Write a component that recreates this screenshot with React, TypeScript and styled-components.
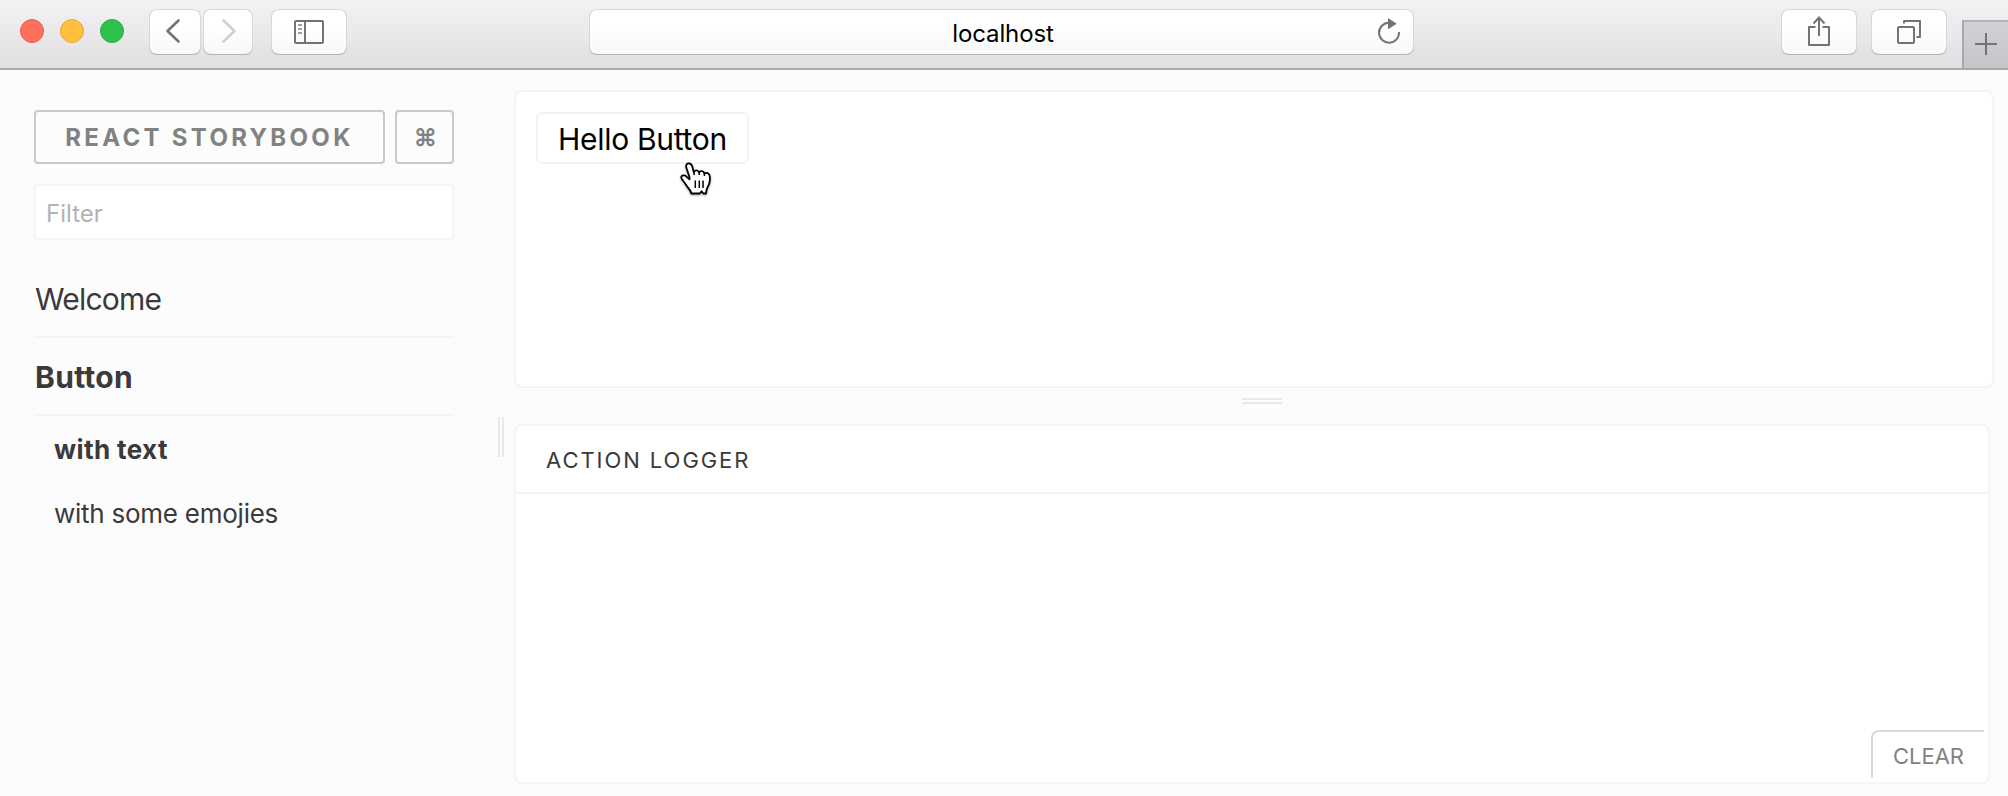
import React from 'react';
import styled, { createGlobalStyle, css } from 'styled-components';

const Global = createGlobalStyle`
  * { box-sizing: border-box; }
  body { margin: 0; background: #fcfcfc; font-family: Inter, "Liberation Sans", sans-serif; color: #333; }
  button { font-family: inherit; margin: 0; padding: 0; }
`;

const Window = styled.div`
  width: 2008px;
  height: 796px;
  display: flex;
  flex-direction: column;
  overflow: hidden;
`;

const Toolbar = styled.header`
  flex: none;
  height: 70px;
  display: flex;
  align-items: flex-start;
  padding: 9px 0 0 20px;
  border-bottom: 2px solid #aca8ae;
  background: linear-gradient(#f4f2f5, #e1dee2);
`;

const Lights = styled.div`
  display: flex;
  gap: 16px;
  padding-top: 10px;
  width: 129px;
`;

const Light = styled.span<{ $fill: string; $edge: string }>`
  width: 24px;
  height: 24px;
  border-radius: 50%;
  background: ${(p) => p.$fill};
  border: 1px solid ${(p) => p.$edge};
`;

const raised = css`
  height: 46px;
  border-radius: 8px;
  background: linear-gradient(#ffffff 30%, #f8f8f8);
  box-shadow: inset 0 -1px 0 #b6b3b8, inset 0 0 0 1px #dad7db;
`;

const ToolButton = styled.button<{ $width: number; $gap?: number }>`
  ${raised}
  border: 0;
  flex: none;
  width: ${(p) => p.$width}px;
  margin-right: ${(p) => p.$gap ?? 0}px;
  display: flex;
`;

const AddressBar = styled.div`
  ${raised}
  flex: none;
  width: 825px;
  margin: 0 367px 0 242px;
  padding: 0 1px 0 54px;
  display: flex;
  align-items: center;
`;

const Address = styled.span`
  flex: 1;
  padding-top: 2px;
  text-align: center;
  font-size: 24px;
  letter-spacing: -0.1px;
  color: #000;
`;

const NewTab = styled.button`
  align-self: flex-end;
  width: 46px;
  height: 48px;
  border: 0;
  border-left: 2px solid #a9a7ab;
  border-top: 2px solid #b4b6ba;
  background: linear-gradient(#d3d1d5, #c7c4c9);
  display: flex;
`;

const Body = styled.div`
  flex: 1;
  min-height: 0;
  display: flex;
`;

const Sidebar = styled.aside`
  flex: none;
  width: 498px;
  padding: 40px 44px 0 34px;
`;

const Brand = styled.div`
  display: flex;
  gap: 10px;
`;

const BrandBox = styled.a<{ $width: number; $spacing?: number }>`
  width: ${(p) => p.$width}px;
  height: 54px;
  border: 2px solid #c9c9c9;
  border-radius: 4px;
  display: flex;
  align-items: center;
  justify-content: center;
  font-size: 24px;
  font-weight: 700;
  letter-spacing: ${(p) => p.$spacing ?? 0}px;
  color: #828282;
`;

const Filter = styled.input`
  display: block;
  width: 420px;
  height: 56px;
  margin: 20px 0 0;
  padding: 3px 10px 0;
  border: 2px solid #f4f4f4;
  border-radius: 4px;
  background: #fff;
  font: 24px Inter, sans-serif;
  &::placeholder { color: #b3b3b3; opacity: 1; }
`;

const KindList = styled.nav`
  width: 420px;
  padding-top: 20px;
`;

const Kind = styled.div<{ $active?: boolean }>`
  height: 78px;
  padding: 2px 0 0 1px;
  display: flex;
  align-items: center;
  border-bottom: 2px solid #f4f4f4;
  font-size: 30px;
  font-weight: ${(p) => (p.$active ? 700 : 400)};
  letter-spacing: ${(p) => (p.$active ? 0.3 : -0.8)}px;
  color: #3a3a3a;
`;

const Story = styled.div<{ $active?: boolean }>`
  height: 64px;
  padding: 2px 0 0 20px;
  display: flex;
  align-items: center;
  font-size: 26px;
  font-weight: ${(p) => (p.$active ? 700 : 400)};
  letter-spacing: ${(p) => (p.$active ? 0.4 : -0.25)}px;
  color: #3a3a3a;
`;

const SideGrip = styled.div`
  flex: none;
  width: 6px;
  height: 40px;
  margin: 347px 10px 0 0;
  border: solid #e9e9e9;
  border-width: 0 2px;
`;

const Main = styled.main`
  flex: 1;
  min-width: 0;
  display: flex;
  flex-direction: column;
  padding-top: 20px;
`;

const Panel = styled.section<{ $width: number; $height: number }>`
  position: relative;
  flex: none;
  width: ${(p) => p.$width}px;
  height: ${(p) => p.$height}px;
  border: 2px solid #f4f4f4;
  border-radius: 8px;
  background: #fff;
`;

const HelloButton = styled.button`
  width: 213px;
  height: 52px;
  margin: 20px 0 0 20px;
  padding-top: 2px;
  border: 2px solid #f3f3f3;
  border-radius: 6px;
  background: #fff;
  font-size: 30px;
  letter-spacing: -0.3px;
  color: #000;
  white-space: nowrap;
`;

const Pointer = styled.svg`
  position: absolute;
  left: 164px;
  top: 68px;
  overflow: visible;
  filter: drop-shadow(0 1px 1px rgba(0, 0, 0, 0.35));
`;

const Divider = styled.div`
  height: 36px;
  width: 1496px;
  display: flex;
  justify-content: center;
  padding-top: 10px;
`;

const Grip = styled.span`
  width: 40px;
  height: 6px;
  border: solid #e9e9e9;
  border-width: 2px 0;
`;

const PanelTitle = styled.h2`
  height: 68px;
  margin: 0;
  padding: 2px 0 0 30px;
  border-bottom: 2px solid #f4f4f4;
  display: flex;
  align-items: center;
  font-size: 22px;
  font-weight: 400;
  letter-spacing: 1.95px;
  color: #3a3a3a;
`;

const ClearButton = styled.button`
  position: absolute;
  right: 4px;
  bottom: 4px;
  width: 113px;
  height: 48px;
  padding-top: 2px;
  border: solid #d9d9d9;
  border-width: 2px 0 0 2px;
  border-radius: 8px 0 0 0;
  background: #fff;
  font-size: 22px;
  color: #828282;
`;

const Glyph = styled.svg.attrs({ fill: 'none', strokeWidth: 2, height: 46 })`
  flex: none;
  display: block;
  stroke: #737373;
`;

const Chevron = styled(Glyph)<{ $dim?: boolean }>`
  stroke: ${(p) => (p.$dim ? '#d0d0d0' : '#737373')};
  stroke-width: 2.6px;
  stroke-linecap: round;
  stroke-linejoin: round;
`;

export default function App() {
  return (
    <Window>
      <Global />
      <Toolbar>
        <Lights>
          <Light $fill="#ff6f5c" $edge="#e8604f" />
          <Light $fill="#ffbf3d" $edge="#e5a935" />
          <Light $fill="#2ec24d" $edge="#27a93f" />
        </Lights>
        <ToolButton $width={52} $gap={2}>
          <Chevron width="52">
            <path d="M29.500 11.500 18.500 22 29.500 32.500" />
          </Chevron>
        </ToolButton>
        <ToolButton $width={50} $gap={18}>
          <Chevron width="50" $dim>
            <path d="M20.500 11.500 31.500 22 20.500 32.500" />
          </Chevron>
        </ToolButton>
        <ToolButton $width={76}>
          <Glyph width="76">
            <rect x="24" y="12" width="28" height="22" rx="1" />
            <path d="M34 12v22" />
            <path d="M27 16h4M27 20h4M27 24h4" stroke="#a0a0a0" />
          </Glyph>
        </ToolButton>
        <AddressBar>
          <Address>localhost</Address>
          <Glyph width="50">
            <path d="M36 23A10 10 0 1 1 26 13.700" />
            <path d="M25 9 33.700 14.700 25 20.300Z" fill="#737373" stroke="none" />
          </Glyph>
        </AddressBar>
        <ToolButton $width={76} $gap={14}>
          <Glyph width="76">
            <path d="M34.500 18H28V36H48V18H41.500" strokeLinejoin="round" />
            <path d="M38 27V8.500M32.500 14.500 38 8.500 43.500 14.500" />
          </Glyph>
        </ToolButton>
        <ToolButton $width={76} $gap={15}>
          <Glyph width="76">
            <rect x="27" y="18" width="16" height="16" rx="1" />
            <path d="M33 14.500V12H49V28H45.500" strokeLinejoin="round" />
          </Glyph>
        </ToolButton>
        <NewTab>
          <Glyph width="44">
            <path d="M22 11v22M11 22h22" />
          </Glyph>
        </NewTab>
      </Toolbar>
      <Body>
        <Sidebar>
          <Brand>
            <BrandBox $width={351} $spacing={3.3}>REACT STORYBOOK</BrandBox>
            <BrandBox $width={59} $spacing={-1.6}>⌘</BrandBox>
          </Brand>
          <Filter placeholder="Filter" />
          <KindList>
            <Kind>Welcome</Kind>
            <Kind $active>Button</Kind>
            <Story $active>with text</Story>
            <Story>with some emojies</Story>
          </KindList>
        </Sidebar>
        <SideGrip />
        <Main>
          <Panel $width={1480} $height={298}>
            <HelloButton>Hello Button</HelloButton>
            <Pointer width="32" height="36">
              <path
                d="M9.500 17 6.600 8.500C5.600 5.500 6.400 3.400 8.600 3.300 10.600 3.200 11.700 4.500 12.300 6.500L13.800 12.200C14.300 9.900 18 9.600 19 12.400 20.300 10.400 23.800 10.900 24.400 13.600 26.300 12.100 29.200 13 29.600 15.500 30.300 18.500 29.900 21.500 29 24.200 28.200 26.600 26.700 28.200 26.500 30.300L26 33.500H23.300L21.600 31.300 19.700 33.500H11.300C11.300 31.500 9.900 29.800 8.200 27.800 6.300 25.500 5 22.800 3.300 21 1.600 19.100.6 17.500 1.600 16.200 2.700 14.800 5.200 15.200 6.700 16.800L9.500 19.300Z"
                fill="#fff"
                stroke="#000"
                strokeWidth="1.8"
                strokeLinejoin="round"
              />
              <path
                d="M13.800 12.200 14.300 15M19 12.400 19.300 15M24.400 13.600V16M15.300 20.500V28M19.300 20.500V28M23 20.500V28"
                fill="none"
                stroke="#000"
                strokeWidth="1.500"
              />
            </Pointer>
          </Panel>
          <Divider><Grip /></Divider>
          <Panel $width={1476} $height={360}>
            <PanelTitle>ACTION LOGGER</PanelTitle>
            <ClearButton>CLEAR</ClearButton>
          </Panel>
        </Main>
      </Body>
    </Window>
  );
}
